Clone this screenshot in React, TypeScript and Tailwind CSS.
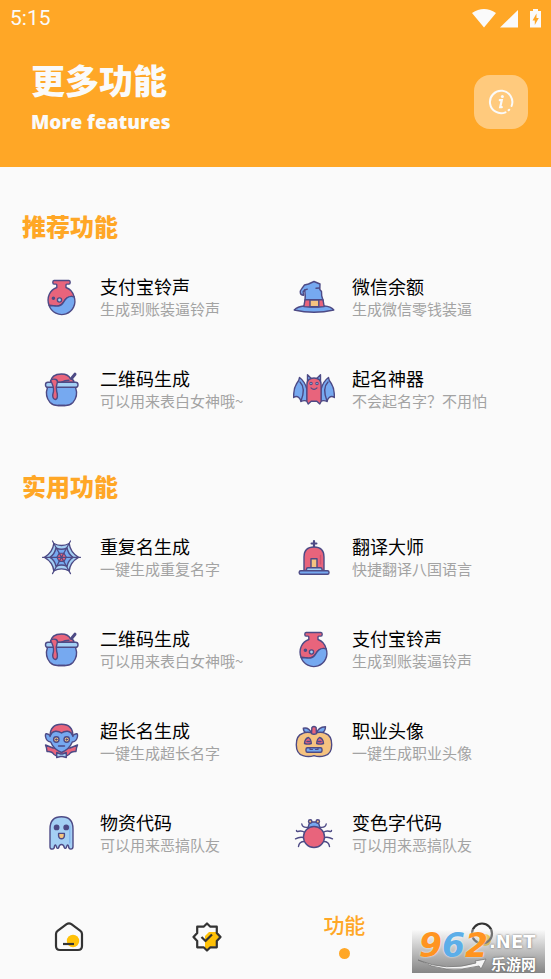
import type { ReactNode } from "react";

const LINE = "#4d4a85";
const RED = "#e8647c";
const BLUE = "#76a9f0";
const SKY = "#a4cff4";
const SAND = "#f5c380";

function Glyph({ children }: { children: ReactNode }) {
  return (
    <svg viewBox="0 0 42 42" className="size-[42px] shrink-0" fill="none" stroke={LINE} strokeWidth="1.4" strokeLinecap="round" strokeLinejoin="round" aria-hidden="true">
      {children}
    </svg>
  );
}

const Potion = () => (
  <Glyph>
    <path d="M13 4.500h15q1.200 0 1.200 1.800t-1.200 1.800h-2.200q-.8 0-.8 1v2.400q6.500 2.300 8.200 9.500-3.600-1.600-7 .8c-4.400 3.200-3.600 7.400-8.800 8.200-3.500.5-6.500-.8-9.300-.4-3-8.600 1-15.700 7.700-18.100V9.100q0-1-.8-1H13q-1.200 0-1.200-1.800T13 4.500z" fill={RED} />
    <path d="M8.100 29.600c2.800-.4 5.800.9 9.300.4 5.200-.8 4.400-5 8.800-8.200q3.400-2.400 7-.8a13 13 0 0 1-25.100 8.600z" fill={BLUE} />
    <circle cx="18.500" cy="24" r="2.100" fill={SKY} />
    <circle cx="12.400" cy="22.300" r="1.100" fill={LINE} />
  </Glyph>
);

const Cauldron = () => (
  <Glyph>
    <path d="M28 13.500l6-7.300" strokeWidth="3" />
    <path d="M9.500 14.500C10 8 15 6 20.500 6c4 0 7.500 1.500 9 5 2.500.3 3.500 1.700 3.500 3.500z" fill={RED} />
    <path d="M6.500 19.300q-3 9 2.600 15.200 3 3 7.400 3h8q4.400 0 7.400-3 5.600-6.200 2.600-15.200z" fill={BLUE} />
    <rect x="4.500" y="14.300" width="32.500" height="5" rx="2.400" fill={SKY} />
    <path d="M9.500 12.500q2-2 5.500-1 2 .8 1.200 3.500-1.400 3.500-.6 8c1.500 4.500 1 8.500-1.400 8.500s-3.200-3.500-1.700-8c.5-4.500-.5-7-3-11z" fill={RED} />
    <path d="M17 37.500h7M20 14.300q4-2 8-2" />
  </Glyph>
);

const WitchHat = () => (
  <Glyph>
    <path d="M12 24.500c.6-4 .2-7.500-.3-10.500l-1.600 1.800.5 3.400c-3.700.1-4.300-3.800-2-6.300L11.500 9l4-1 5.500-2.500L27 8l-.2 5.500 1.700 2 .2 4.200 1.400 4.800z" fill={BLUE} />
    <path d="M1.200 34c3-3 6.500-3.800 9.500-4h20.600c4.200.2 7.400 1.500 9.500 4q-10 2.300-19.800 2.300T1.200 34z" fill={BLUE} />
    <path d="M12 23.800h18l1.200 6.800q-10.200 1-20.400 0z" fill={RED} />
    <path d="M17 24h8.800v6.800H17z" fill={SAND} />
    <path d="M23 12.300l3.500-.3M11.700 14l2.600-.8" />
  </Glyph>
);

const Bat = () => (
  <Glyph>
    <path d="M14 21.500q-2-8-7.500-12-.2 3-2.800 6Q.5 20.500.6 29.500q2.900-2 5.400.2 1.500 1.300 2 3.800 2.500-1.500 6-.5z" fill={BLUE} />
    <path d="M28 21.500q2-8 7.500-12 .2 3 2.800 6 3.200 5 3.100 14-2.900-2-5.400.2-1.500 1.300-2 3.800-2.500-1.500-6-.5z" fill={BLUE} />
    <path d="M7 14q6 6 1 19M35 14q-6 6-1 19" />
    <path d="M14.500 13.500V6.800l4 4zM27.500 13.500V6.800l-4 4z" fill={BLUE} />
    <path d="M13.900 17q0-7 7.100-7t7.100 7v16.500L26.800 36l-3-2.800h-5.600l-3 2.800-1.300-2.500z" fill={RED} />
    <circle cx="18" cy="15.500" r="1.200" fill={SKY} strokeWidth="1.100" />
    <circle cx="24" cy="15.500" r="1.200" fill={SKY} strokeWidth="1.100" />
    <path d="M18 19.800q3 3 6 0" strokeWidth="1.200" />
  </Glyph>
);

const Web = () => (
  <Glyph>
    <path d="M12.800 7.500q7.700 4 15.400 0 1 8.700 9.300 13.800-8.300 4.700-9.300 13.600-7.700-4-15.400 0-1-8.900-9.300-13.600 8.300-5.100 9.300-13.800z" fill={SKY} />
    <path d="M15 12q5.500 2.500 11 0 1.200 6 6 9.300-4.800 3-6 9-5.500-2.500-11 0-1.200-6-6-9 4.800-3.300 6-9.300z" fill={BLUE} />
    <path d="M18.200 17.200h4.800l2.300 4.100-2.300 4.100h-4.800l-2.300-4.100z" fill={RED} strokeWidth="1.100" />
    <path d="M1.500 21.300h38M11.500 5l18 32.600M29.500 5l-18 32.600" strokeWidth="1.200" />
  </Glyph>
);

const Tomb = () => (
  <Glyph>
    <path d="M21 5v6M18.600 7.500h4.800" strokeWidth="2.200" />
    <path d="M11 34.500V21q0-10 10-10t10 10v13.500z" fill={RED} />
    <path d="M18 32.500V22.800h6v9.700z" fill={SAND} />
    <rect x="13.500" y="31.800" width="15.500" height="3.500" rx="1.500" fill={SKY} />
    <rect x="6.200" y="34.800" width="29.800" height="3.400" rx="1.500" fill={BLUE} />
    <path d="M27.500 19.500V28" stroke="#cf5370" />
  </Glyph>
);

const Vampire = () => (
  <Glyph>
    <path d="M12 28L4.500 25q1.500 3.500 1.500 6.500 5-.5 7 3l2.500 1.500h10l2.500-1.500q2-3.500 7-3 0-3 1.500-6.500L29 28z" fill={RED} />
    <path d="M9.300 15.500q-5.500-4-4.800 1 .8 5 5.200 5.500 2.800 7 10.800 10.500 8-3.500 10.800-10.500 4.400-.5 5.200-5.500.7-5-4.800-1l-2-6q-9.200-4-18.400 0z" fill={BLUE} />
    <path d="M9 16.500Q9 4.300 20.500 4.300T32 16.500q-1.700-5-5.500-5.300-3.500-.2-6 1.800-2.500-2-6-1.800-3.800.3-5.500 5.300z" fill={RED} />
    <circle cx="15.300" cy="19.500" r="2.700" fill={SAND} />
    <circle cx="25.700" cy="19.500" r="2.700" fill={SAND} />
    <circle cx="15.300" cy="19.500" r=".7" fill={LINE} strokeWidth="1" />
    <circle cx="25.700" cy="19.500" r=".7" fill={LINE} strokeWidth="1" />
    <path d="M17.500 26h6" />
    <path d="M15.700 32.500l3.800 1.500h2l3.800-1.500v5l-3.800-1h-2l-3.800 1z" fill={SKY} />
  </Glyph>
);

const Ghost = () => (
  <Glyph>
    <path d="M9 17Q9 4.800 20.500 4.800T32 17v17.500q0 2.600-2.200 2.600T27.500 34q-.6-2-1.700 0l-.5 1.500q-.7 1.800-2 0-.6-3-2.800-3t-2.800 3q-1.300 1.800-2 0l-.5-1.500q-1.100-2-1.700 0 0 3.100-2.300 3.100T9 34.500z" fill={SKY} />
    <path d="M28.800 14v17" stroke="#83b5ef" />
    <circle cx="15.600" cy="15.400" r="2.200" fill={LINE} />
    <circle cx="25.200" cy="15.400" r="2.200" fill={LINE} />
    <path d="M17.600 21.400h5.800V24q-.4 2.800-2.900 2.800T17.600 24z" fill={SAND} />
  </Glyph>
);

const Pumpkin = () => (
  <Glyph>
    <path d="M18.500 13.500Q16 7 10.300 8.200q.2 3.800 3.200 5.300zM23.500 13.500q1.500-6.500 9-6.800 0 5-4.500 6.800z" fill={BLUE} />
    <path d="M21 13.500q7-2.400 11.500 0 6.200 2 6.200 11.200 0 9-6.700 10.900-5.500 1.800-11 0-5.500 1.800-11 0-6.700-1.900-6.700-10.900 0-9.200 6.200-11.200 4.500-2.400 11.500 0z" fill={SAND} />
    <path d="M18.500 13.700l.4-6.200q2-2 4.200 0l.4 6.200q-2.500 1.200-5 0z" fill={RED} />
    <path d="M11.500 23.500q.3-5 4-6 2.500 1.500 2.800 6-3.500 1.200-6.800 0zM30.500 23.500q-.3-5-4-6-2.500 1.500-2.800 6 3.500 1.200 6.800 0z" fill={RED} />
    <path d="M14 21.500h3M25 21.500h3" />
    <rect x="13" y="27.800" width="16" height="4.400" rx="1.500" fill={BLUE} />
    <path d="M17 28v1.500h2.500M25 28v1.500h-2.500" strokeWidth="1.100" />
  </Glyph>
);

const Spider = () => (
  <Glyph>
    <path d="M15 15.200Q9.500 16 8.800 12M27 15.200q5.500.8 6.200-3.200M12 20.500q-3.500-2.500-7.500-1-1 .2-1-1M30 20.500q3.500-2.500 7.500-1 1 .2 1-1M10.500 25.500q-4-1-8 1.300M31.500 25.500q4-1 8 1.300M11.500 29.500Q6 29.500 5.500 34.500M30.500 29.500q5.500 0 6 5" />
    <path d="M15.200 16.500q.3-6 3.300-6.500h5q3 .5 3.300 6.500z" fill={BLUE} />
    <circle cx="17.200" cy="9.500" r="1.700" fill={SAND} />
    <circle cx="24.800" cy="9.500" r="1.700" fill={SAND} />
    <circle cx="21" cy="25" r="10.500" fill={RED} />
  </Glyph>
);

const recommended = [
  { title: "支付宝铃声", text: "生成到账装逼铃声", icon: <Potion /> },
  { title: "微信余额", text: "生成微信零钱装逼", icon: <WitchHat /> },
  { title: "二维码生成", text: "可以用来表白女神哦~", icon: <Cauldron /> },
  { title: "起名神器", text: "不会起名字？不用怕", icon: <Bat /> },
];

const practical = [
  { title: "重复名生成", text: "一键生成重复名字", icon: <Web /> },
  { title: "翻译大师", text: "快捷翻译八国语言", icon: <Tomb /> },
  { title: "二维码生成", text: "可以用来表白女神哦~", icon: <Cauldron /> },
  { title: "支付宝铃声", text: "生成到账装逼铃声", icon: <Potion /> },
  { title: "超长名生成", text: "一键生成超长名字", icon: <Vampire /> },
  { title: "职业头像", text: "一键生成职业头像", icon: <Pumpkin /> },
  { title: "物资代码", text: "可以用来恶搞队友", icon: <Ghost /> },
  { title: "变色字代码", text: "可以用来恶搞队友", icon: <Spider /> },
];

function Section({ title, items }: { title: string; items: typeof recommended }) {
  return (
    <section className="pt-9">
      <h2 className="mb-[10px] pl-[22px] text-2xl leading-[30px] font-black text-[#ffa726]">{title}</h2>
      <ul className="grid grid-cols-2 pr-[6px] pl-[41px]">
        {items.map(item => (
          <li key={item.title}>
            <a href="#" className="flex h-[92px] items-center gap-[17px]">
              {item.icon}
              <span className="flex flex-col whitespace-nowrap">
                <span className="text-lg leading-6 text-black">{item.title}</span>
                <span className="text-[15px] leading-[22px] text-[#a3a3a3]">{item.text}</span>
              </span>
            </a>
          </li>
        ))}
      </ul>
    </section>
  );
}

function Watermark() {
  return (
    <div className="absolute right-[6px] bottom-[6px] h-11 w-[133px] bg-linear-to-b from-white/30 to-[#858585]">
      <svg viewBox="0 0 133 44" className="absolute inset-0 size-full" aria-hidden="true">
        <path d="M6 31q28 12 58 3l-1-2 11-2-5 10-2-3Q32 46 6 31z" fill="#f4f4f4" stroke="#777" strokeWidth=".8" />
      </svg>
      <span className="absolute top-0 left-[7px] font-['DejaVu_Sans'] text-[33px] leading-[33px] font-bold italic text-[#ff9420] [text-shadow:0_0_2px_white]">
        9<span className="text-[#5caee8]">6</span>2
      </span>
      <span className="absolute top-[5px] left-[77px] font-['DejaVu_Sans'] text-lg leading-4 font-bold text-white [text-shadow:0_0_2px_#555]">.NET</span>
      <span className="absolute top-[27px] left-[79px] text-[15px] leading-4 font-bold text-white [text-shadow:0_0_2px_#555]">乐游网</span>
    </div>
  );
}

export default function App() {
  return (
    <div className="relative flex min-h-screen flex-col bg-[#fafafa] font-['Noto_Sans_CJK_SC',sans-serif]">
      <header className="bg-[#ffa726] text-[#fafafa]">
        <div className="flex h-[38px] items-center justify-between pr-[9px] pl-[10px]">
          <span className="font-[Roboto] text-[21px]">5:15</span>
          <svg viewBox="0 0 70 20" className="h-5 w-[70px]" fill="currentColor" aria-hidden="true">
            <path d="M0 4Q12-4 24 4L12 18.500zM46 1v17.500H28zM58 2h3V0h5v2h3v16.500H58z" />
            <path d="M64.500 4.500l-4 7h2.300V16l4-7h-2.300z" fill="#ffa726" />
          </svg>
        </div>
        <div className="flex h-[129px] items-start justify-between pt-5 pr-[23px] pl-[31px]">
          <div>
            <h1 className="text-[34px] leading-[44px] font-black">更多功能</h1>
            <p className="font-['Open_Sans'] text-[19px] leading-10 font-extrabold">More features</p>
          </div>
          <button type="button" aria-label="Info" className="mt-[17px] grid size-[54px] place-items-center rounded-2xl bg-[#ffca7d]">
            <svg viewBox="0 0 26 26" className="size-[26px]" fill="none" stroke="currentColor" strokeWidth="2" strokeLinecap="round">
              <path d="M17.500 23.300A11.200 11.200 0 1 1 23.600 17M20.600 21.300l.6-.6" />
              <path d="M11.800 11.200h2l-1.600 7h1.600" strokeWidth="2.200" />
              <circle cx="14.400" cy="7.600" r="1.500" fill="currentColor" stroke="none" />
            </svg>
          </button>
        </div>
      </header>
      <main className="pt-2">
        <Section title="推荐功能" items={recommended} />
        <Section title="实用功能" items={practical} />
      </main>
      <nav className="mt-auto grid h-[84px] grid-cols-4">
        <button type="button" aria-label="首页" className="grid place-items-center">
          <svg viewBox="0 0 30 30" className="size-[30px]" fill="none" aria-hidden="true">
            <circle cx="19" cy="19" r="6.200" fill="#ffc107" />
            <path d="M2 12q0-2 1.600-3.200l9-6.600q2.400-1.600 4.800 0l9 6.600Q28 10 28 12v12q0 4-4 4H6q-4 0-4-4z" stroke="#333" strokeWidth="2.200" />
            <path d="M9 22h11" stroke="#333" strokeWidth="2.200" />
          </svg>
        </button>
        <button type="button" aria-label="认证" className="grid place-items-center">
          <svg viewBox="0 0 30 30" className="size-[30px]" fill="none" strokeLinejoin="round" aria-hidden="true">
            <path d="M13 26V14l4-4h8l4 5-4 3v6l-7 1-3 4z" fill="#ffc107" />
            <path d="M15 1.500l3.400 3.200h6.400v6.200l3.700 4.100-3.700 4.100v6.200h-6.400L15 28.500l-3.400-3.200H5.200v-6.200L1.500 15l3.700-4.100V4.700h6.400z" stroke="#333" strokeWidth="2.200" />
            <path d="M9.500 15l4 4L20 12.500" stroke="#333" strokeWidth="2.200" />
          </svg>
        </button>
        <button type="button" className="flex flex-col items-center justify-center gap-2 pb-[7px] text-[21px] leading-8 font-medium text-[#ffa726]">
          功能
          <span className="size-[11px] rounded-full bg-[#ffa726]" />
        </button>
        <button type="button" aria-label="我的" className="grid place-items-center">
          <svg viewBox="0 0 30 30" className="size-[30px]" fill="none" stroke="#333" strokeWidth="2.200" aria-hidden="true">
            <circle cx="18" cy="18" r="6" fill="#ffc107" stroke="none" />
            <circle cx="15" cy="11.500" r="10" />
          </svg>
        </button>
      </nav>
      <Watermark />
    </div>
  );
}
